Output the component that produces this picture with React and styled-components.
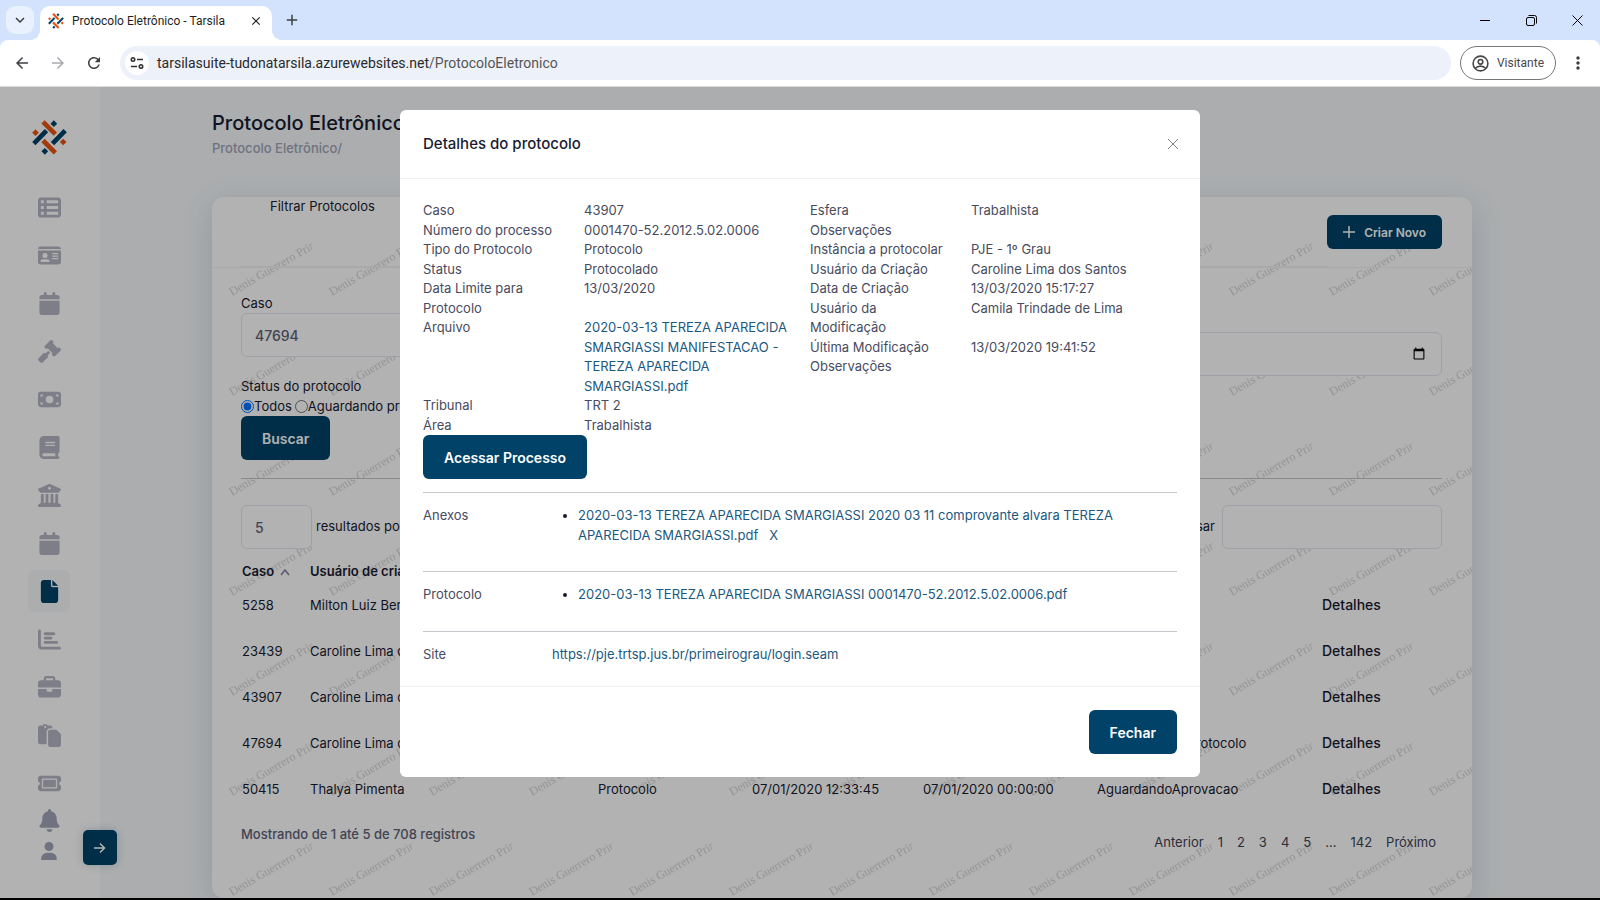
import React, { useState } from 'react';
import styled, { createGlobalStyle } from 'styled-components';
import {
	FaTableList, FaIdCard, FaCalendar, FaGavel, FaMoneyBill, FaBook, FaBuildingColumns,
	FaFile, FaChartBar, FaBriefcase, FaPaste, FaTicket, FaBell, FaUser,
} from 'react-icons/fa6';
import {
	MdKeyboardArrowDown, MdArrowBack, MdArrowForward, MdRefresh, MdClose, MdAdd, MdMoreVert,
} from 'react-icons/md';

const navy = '#004268';
const chromeFont = 'Roboto, "Noto Sans", sans-serif';

const GlobalStyle = createGlobalStyle`
	* {
		box-sizing: border-box;
	}

	body {
		margin: 0;
		font-family: Inter, sans-serif;
		font-size: 13px;
		line-height: 1.5;
		color: #181c32;
	}

	button, input, select {
		font-family: inherit;
	}

	a {
		color: #1b5880;
		text-decoration: none;
	}
`;

/* ---------- browser window ---------- */

const Window = styled.div`
	display: flex;
	flex-direction: column;
	height: 100vh;
	overflow: hidden;
	border-bottom: 2px solid #000;
	background: #d3e3fd;
`;

const TabStrip = styled.div`
	display: flex;
	flex: none;
	align-items: flex-end;
	height: 40px;
	padding-left: 6px;
`;

const ChromeButton = styled.button`
	display: flex;
	flex: none;
	align-items: center;
	justify-content: center;
	width: ${(props) => props.$width || 28}px;
	height: 28px;
	padding: 0;
	border: 0;
	border-radius: 9px;
	background: ${(props) => props.$background || 'none'};
	color: ${(props) => props.$color || '#3c3f43'};
	font-size: ${(props) => props.$size || 18}px;
`;

const TabSearch = styled(ChromeButton)`
	align-self: center;
	margin-right: 6px;
`;

const BrowserTab = styled.div`
	position: relative;
	display: flex;
	align-items: center;
	width: 232px;
	height: 34px;
	padding: 0 2px 5px 8px;
	border-radius: 10px 10px 0 0;
	background: #fff;
	color: #1f1f1f;
	font: 12px/16px ${chromeFont};

	&::before,
	&::after {
		content: '';
		position: absolute;
		bottom: 0;
		width: 10px;
		height: 10px;
	}

	&::before {
		left: -10px;
		background: radial-gradient(circle at 0 0, transparent 10px, #fff 10px);
	}

	&::after {
		right: -10px;
		background: radial-gradient(circle at 100% 0, transparent 10px, #fff 10px);
	}
`;

const TabTitle = styled.span`
	flex: 1;
	padding-left: 8px;
	white-space: nowrap;
`;

const NewTab = styled(ChromeButton)`
	align-self: center;
	margin-left: 6px;
`;

const WindowControls = styled.div`
	display: flex;
	align-self: center;
	margin-left: auto;
`;

const Toolbar = styled.div`
	display: flex;
	flex: none;
	align-items: center;
	height: 47px;
	padding-left: 8px;
	border-bottom: 1px solid #dadce0;
	border-radius: 8px 8px 0 0;
	background: #fff;
`;

const NavButtons = styled.div`
	display: flex;
	gap: 8px;
	margin-right: 12px;
`;

const AddressBar = styled.div`
	display: flex;
	flex: 1;
	align-items: center;
	gap: 8px;
	height: 34px;
	margin-right: 9px;
	padding-left: 5px;
	border-radius: 17px;
	background: #edf1fa;
`;

const SiteInfo = styled.button`
	display: flex;
	align-items: center;
	justify-content: center;
	width: 24px;
	height: 24px;
	padding: 0;
	border: 0;
	border-radius: 50%;
	background: #fff;
`;

const Address = styled.div`
	color: #555;
	font: 14px/20px ${chromeFont};

	span {
		color: #2a2a2a;
	}
`;

const Profile = styled.button`
	display: flex;
	align-items: center;
	gap: 8px;
	height: 34px;
	padding: 0 11px;
	border: 1px solid #747775;
	border-radius: 17px;
	background: #fff;
	color: #474747;
	font: 12px/16px ${chromeFont};
`;

/* ---------- page ---------- */

const Viewport = styled.div`
	position: relative;
	display: flex;
	flex: 1;
	min-height: 0;
	overflow: hidden;
	background: #f5f8fa;
`;

const Sidebar = styled.aside`
	position: relative;
	display: flex;
	flex: none;
	flex-direction: column;
	align-items: center;
	width: 100px;
	padding: 33px 2px 0 0;
	background: #fff;
`;

const Menu = styled.nav`
	display: flex;
	flex-direction: column;
	gap: 6px;
	margin-top: 31px;
`;

const MenuLink = styled.a`
	display: flex;
	align-items: center;
	justify-content: center;
	width: 42px;
	height: 42px;
	border-radius: 6px;
	background: ${(props) => (props.$active ? '#f5f8fa' : 'none')};
	color: ${(props) => (props.$active ? navy : '#b5b5c3')};

	svg {
		width: auto;
		height: 23px;
	}
`;

const SidebarFooter = styled.div`
	display: flex;
	flex-direction: column;
	align-items: center;
	gap: 10px;
	margin-top: 5px;
	color: #a1a5b7;
`;

const IconButton = styled.button`
	display: flex;
	padding: 0;
	border: 0;
	background: none;
	color: inherit;
	font-size: ${(props) => props.$size}px;
`;

const SidebarToggle = styled.button`
	position: absolute;
	right: -17px;
	bottom: 33px;
	display: flex;
	align-items: center;
	justify-content: center;
	width: 34px;
	height: 35px;
	padding: 0;
	border: 0;
	border-radius: 5px;
	background: ${navy};
	box-shadow: 0 0 10px rgba(0, 66, 104, 0.2);
	z-index: 1;
`;

const Main = styled.main`
	flex: 1;
	min-width: 0;
	padding: 22px 128px 0 112px;
`;

const PageTitle = styled.h1`
	margin: 0;
	font-size: 20px;
	font-weight: 500;
	line-height: 28px;
`;

const Breadcrumb = styled.div`
	margin-top: 1px;
	color: #a1a5b7;
	font-weight: 500;
	line-height: 20px;
`;

const Card = styled.section`
	position: relative;
	height: 701px;
	margin-top: 39px;
	border-radius: 12px;
	background: #fff;
	box-shadow: 0 8px 30px rgba(72, 104, 144, 0.2);
	overflow: hidden;
`;

const Watermark = styled.svg`
	position: absolute;
	inset: 0;
	width: 100%;
	height: 100%;
`;

const CardHeader = styled.header`
	position: relative;
	display: flex;
	justify-content: space-between;
	height: 71px;
	padding: 0 30px 0 29px;
	border-bottom: 1px solid #eff2f5;
`;

const FilterHeading = styled.div`
	flex: 1;
	padding-left: 29px;
	border-bottom: 1px solid #eff2f5;
`;

const CardBody = styled.div`
	position: relative;
	padding: 25px 30px 0 29px;
`;

const Button = styled.button`
	display: flex;
	align-items: center;
	justify-content: center;
	gap: 9px;
	width: fit-content;
	height: ${(props) => (props.$small ? 34 : 44)}px;
	padding: 0 ${(props) => (props.$small ? 16 : 21)}px;
	border: 0;
	border-radius: 6px;
	background: ${navy};
	color: #fff;
	font-size: ${(props) => (props.$small ? 12 : 14)}px;
	font-weight: 600;
`;

const HeaderButton = styled(Button)`
	margin-top: 18px;
`;

const Fields = styled.div`
	display: grid;
	grid-template-columns: 1fr 1fr;
	align-items: start;
	column-gap: 20px;
`;

const Label = styled.label`
	display: block;
	line-height: 20px;
`;

const Input = styled.input`
	display: block;
	width: ${(props) => props.$width || '100%'};
	height: 44px;
	padding: 0 13px;
	border: 1px solid #e4e6ef;
	border-radius: 6px;
	background: #fff;
	color: #5e6278;
	font-size: 14px;
	font-weight: 500;
`;

const DateField = styled.div`
	padding-top: 39px;
`;

const StatusField = styled.fieldset`
	margin: 0;
	padding: 0;
	border: 0;
	line-height: 20px;

	legend {
		padding: 0;
	}

	label {
		display: flex;
		align-items: center;
	}

	input {
		margin: 0;
	}
`;

const RadioRow = styled.div`
	display: flex;
	gap: 3px;
`;

const Divider = styled.hr`
	height: 1px;
	margin: ${(props) => props.$space || 13}px 0;
	border: 0;
	background: #c5c6cc;
`;

const TableTools = styled.div`
	display: flex;
	justify-content: space-between;
	margin-top: 26px;
`;

const ToolGroup = styled.div`
	display: flex;
	align-items: center;
	gap: ${(props) => props.$gap}px;
`;

const PageSize = styled.select`
	width: 71px;
	height: 44px;
	padding: 0 13px;
	border: 1px solid #e4e6ef;
	border-radius: 6px;
	background: #fff;
	color: #5e6278;
	font-size: 14px;
	font-weight: 500;
	appearance: none;
`;

const Table = styled.table`
	width: 100%;
	margin-top: 11px;
	border-collapse: collapse;
	table-layout: fixed;
	text-align: left;

	th {
		height: 23px;
		padding: 0 1px;
		font-weight: 600;
		white-space: nowrap;
	}

	td {
		height: 46px;
		padding: 0 1px;
		white-space: nowrap;
	}
`;

const SortIcon = styled.svg`
	margin-left: 3px;
`;

const DetailsLink = styled.button`
	padding: 0;
	border: 0;
	background: none;
	color: #181c32;
	font-size: 14px;
	font-weight: 500;
`;

const TableFooter = styled.div`
	display: flex;
	justify-content: space-between;
	margin-top: 11px;
	color: #5e6278;
	font-weight: 500;
	line-height: 20px;
`;

const Pagination = styled.nav`
	display: flex;
	gap: 14px;
	padding: 8px 6px 0 0;
	font-weight: 400;

	a, span {
		color: #3f4254;
	}
`;

/* ---------- modal ---------- */

const Backdrop = styled.div`
	position: absolute;
	inset: 0;
	display: flex;
	align-items: flex-start;
	justify-content: center;
	padding-top: 23px;
	background: rgba(0, 0, 0, 0.3);
	z-index: 2;
`;

const Modal = styled.div`
	width: 100%;
	max-width: 800px;
	border-radius: 6px;
	background: #fff;
	color: #484b5e;
`;

const ModalHeader = styled.header`
	display: flex;
	align-items: center;
	justify-content: space-between;
	height: 69px;
	padding: 0 21px 0 23px;
	border-bottom: 1px solid #eff2f5;
`;

const ModalTitle = styled.h2`
	margin: 0;
	color: #181c32;
	font-size: 15px;
	font-weight: 500;
	line-height: 20px;
`;

const ModalBody = styled.div`
	padding: 22px 23px;
`;

const ModalFooter = styled.footer`
	display: flex;
	justify-content: flex-end;
	padding: 23px;
	border-top: 1px solid #eff2f5;
`;

const Columns = styled.div`
	display: grid;
	grid-template-columns: 1fr 1fr;
	column-gap: 20px;
`;

const Details = styled.dl`
	margin: 0;

	div {
		display: grid;
		grid-template-columns: 141px 1fr;
		column-gap: 20px;
	}

	dd {
		margin: 0;
	}
`;

const Section = styled.section`
	display: grid;
	grid-template-columns: 109px 1fr;
	column-gap: 20px;
`;

const Files = styled.ul`
	margin: 0 0 13px;
	padding-left: 26px;

	li::marker {
		color: #181c32;
	}

	a + a {
		margin-left: 11px;
	}
`;

const menu = [
	['Painel', FaTableList],
	['Contatos', FaIdCard],
	['Agenda', FaCalendar],
	['Processos', FaGavel],
	['Financeiro', FaMoneyBill],
	['Publicações', FaBook],
	['Tribunais', FaBuildingColumns],
	['Prazos', FaCalendar],
	['Protocolo Eletrônico', FaFile],
	['Relatórios', FaChartBar],
	['Escritório', FaBriefcase],
	['Documentos', FaPaste],
	['Chamados', FaTicket],
];

const protocols = [
	['5258', 'Milton Luiz Bernardo', 'Protocolo', '06/01/2020 10:12:08', '07/01/2020 00:00:00', 'Protocolado'],
	['23439', 'Caroline Lima dos Santos', 'Protocolo', '10/02/2020 11:40:31', '11/02/2020 00:00:00', 'Protocolado'],
	['43907', 'Caroline Lima dos Santos', 'Protocolo', '13/03/2020 15:17:27', '13/03/2020 00:00:00', 'Protocolado'],
	['47694', 'Caroline Lima dos Santos', 'Protocolo', '16/03/2020 09:25:14', '17/03/2020 00:00:00', 'Aguardando o Protocolo'],
	['50415', 'Thalya Pimenta', 'Protocolo', '07/01/2020 12:33:45', '07/01/2020 00:00:00', 'AguardandoAprovacao'],
];

const leftDetails = [
	['Caso', '43907'],
	['Número do processo', '0001470-52.2012.5.02.0006'],
	['Tipo do Protocolo', 'Protocolo'],
	['Status', 'Protocolado'],
	['Data Limite para Protocolo', '13/03/2020'],
	['Arquivo', <a href="#arquivo">2020-03-13 TEREZA APARECIDA SMARGIASSI MANIFESTACAO - TEREZA APARECIDA SMARGIASSI.pdf</a>],
	['Tribunal', 'TRT 2'],
	['Área', 'Trabalhista'],
];

const rightDetails = [
	['Esfera', 'Trabalhista'],
	['Observações', ''],
	['Instância a protocolar', 'PJE - 1º Grau'],
	['Usuário da Criação', 'Caroline Lima dos Santos'],
	['Data de Criação', '13/03/2020 15:17:27'],
	['Usuário da Modificação', 'Camila Trindade de Lima'],
	['Última Modificação', '13/03/2020 19:41:52'],
	['Observações', ''],
];

const Logo = ({ size }) => (
	<svg width={size} height={size} viewBox="0 0 104 105" fill="none" strokeWidth="14" aria-hidden="true">
		<path stroke="#ea5412" d="M32.5 5.5l37 37M32.5 61.5l37 37" />
		<path stroke={navy} d="M5 71l38-39M61 71l38-39" />
		<path fill="#ea5412" d="M10 28l10 10-10 10L0 38zM93 56l10 10-10 10-10-10z" />
		<path fill={navy} d="M65 1l10 10-10 10-10-10zM38 84l10 10-10 10-10-10z" />
	</svg>
);

const DetailList = ({ items }) => (
	<Details>
		{items.map(([label, value], i) => (
			<div key={i}>
				<dt>{label}</dt>
				<dd>{value}</dd>
			</div>
		))}
	</Details>
);

const Browser = () => (
	<>
		<TabStrip>
			<TabSearch aria-label="Pesquisar guias" $background="#e9f1fe"><MdKeyboardArrowDown /></TabSearch>
			<BrowserTab>
				<Logo size={16} />
				<TabTitle>Protocolo Eletrônico - Tarsila</TabTitle>
				<ChromeButton aria-label="Fechar guia" $size={14} $color="#1f1f1f"><MdClose /></ChromeButton>
			</BrowserTab>
			<NewTab aria-label="Nova guia"><MdAdd /></NewTab>
			<WindowControls>
				<ChromeButton aria-label="Minimizar" $width={46}>
					<svg width="10" height="10" stroke="#000"><path d="M0 5.5h10" /></svg>
				</ChromeButton>
				<ChromeButton aria-label="Restaurar" $width={46}>
					<svg width="11" height="11" fill="none" stroke="#000">
						<rect x="0.5" y="2.5" width="8" height="8" rx="1.5" />
						<path d="M2.5 .5h6a2 2 0 0 1 2 2v6" />
					</svg>
				</ChromeButton>
				<ChromeButton aria-label="Fechar janela" $width={46}>
					<svg width="11" height="11" stroke="#000"><path d="M.5.5l10 10M10.5.5l-10 10" /></svg>
				</ChromeButton>
			</WindowControls>
		</TabStrip>
		<Toolbar>
			<NavButtons>
				<ChromeButton aria-label="Voltar"><MdArrowBack /></ChromeButton>
				<ChromeButton aria-label="Avançar" $color="#a9abae"><MdArrowForward /></ChromeButton>
				<ChromeButton aria-label="Recarregar"><MdRefresh /></ChromeButton>
			</NavButtons>
			<AddressBar>
				<SiteInfo aria-label="Informações do site">
					<svg width="14" height="12" viewBox="0 0 14 12" fill="none" stroke="#303134" strokeWidth="1.6">
						<circle cx="3" cy="2.5" r="1.7" />
						<path d="M7 2.5h6M1 9.5h6" />
						<circle cx="11" cy="9.5" r="1.7" />
					</svg>
				</SiteInfo>
				<Address><span>tarsilasuite-tudonatarsila.azurewebsites.net</span>/ProtocoloEletronico</Address>
			</AddressBar>
			<Profile>
				<svg width="17" height="17" viewBox="0 0 17 17" fill="none" stroke="currentColor" strokeWidth="1.6">
					<circle cx="8.5" cy="8.5" r="7.4" />
					<circle cx="8.5" cy="6.8" r="2.3" />
					<path d="M3.4 13.4c1.2-1.7 3-2.3 5.1-2.3s3.9.6 5.1 2.3" />
				</svg>
				Visitante
			</Profile>
			<ChromeButton aria-label="Menu" $width={44}><MdMoreVert size={20} /></ChromeButton>
		</Toolbar>
	</>
);

const App = () => {
	const [open, setOpen] = useState(true);

	return (
		<Window>
			<GlobalStyle />
			<Browser />
			<Viewport>
				<Sidebar>
					<Logo size={35} />
					<Menu>
						{menu.map(([name, Icon], i) => (
							<MenuLink key={name} href="#menu" aria-label={name} $active={i === 8}><Icon /></MenuLink>
						))}
					</Menu>
					<SidebarFooter>
						<IconButton aria-label="Notificações" $size={23}><FaBell /></IconButton>
						<IconButton aria-label="Usuário" $size={18}><FaUser /></IconButton>
					</SidebarFooter>
					<SidebarToggle aria-label="Expandir menu">
						<svg width="12" height="12" fill="none" stroke="#fff" strokeWidth="1.5"><path d="M0 6h10M6 1.5l4.5 4.5L6 10.5" /></svg>
					</SidebarToggle>
				</Sidebar>
				<Main>
					<PageTitle>Protocolo Eletrônico</PageTitle>
					<Breadcrumb>Protocolo Eletrônico/</Breadcrumb>
					<Card>
						<Watermark aria-hidden="true">
							<defs>
								<pattern id="watermark" width="100" height="100" patternUnits="userSpaceOnUse">
									<text
										transform="translate(20 99) rotate(-30)"
										fill="#000"
										fillOpacity="0.18"
										fontFamily="Liberation Serif, serif"
										fontSize="12"
									>
										Denis Guerrero Prin
									</text>
								</pattern>
							</defs>
							<rect width="100%" height="100%" fill="url(#watermark)" />
						</Watermark>
						<CardHeader>
							<FilterHeading>Filtrar Protocolos</FilterHeading>
							<HeaderButton $small>
								<svg width="12" height="12" stroke="#fff" strokeWidth="1.5"><path d="M6 0v12M0 6h12" /></svg>
								Criar Novo
							</HeaderButton>
						</CardHeader>
						<CardBody>
							<Fields>
								<div>
									<Label htmlFor="caso">Caso</Label>
									<Input id="caso" defaultValue="47694" />
								</div>
								<DateField>
									<Input type="date" aria-label="Data limite" />
								</DateField>
							</Fields>
							<StatusField>
								<legend>Status do protocolo</legend>
								<RadioRow>
									<label><input type="radio" name="status" defaultChecked />Todos</label>
									<label><input type="radio" name="status" />Aguardando protocolo</label>
								</RadioRow>
							</StatusField>
							<Button>Buscar</Button>
							<Divider $space={18} />
							<TableTools>
								<ToolGroup $gap={4}>
									<PageSize id="page-size" defaultValue="5">
										<option>5</option>
										<option>10</option>
									</PageSize>
									<label htmlFor="page-size">resultados por página</label>
								</ToolGroup>
								<ToolGroup $gap={7}>
									<label htmlFor="search">Pesquisar</label>
									<Input id="search" $width="220px" />
								</ToolGroup>
							</TableTools>
							<Table>
								<colgroup>
									<col width="68" />
									<col width="288" />
									<col width="154" />
									<col width="171" />
									<col width="174" />
									<col width="225" />
									<col />
								</colgroup>
								<thead>
									<tr>
										<th>
											Caso
											<SortIcon width="16" height="8" viewBox="0 0 16 8" fill="none" stroke="#7e8299" strokeWidth="1.5"><path d="M4 7l4-5 4 5" /></SortIcon>
										</th>
										<th>Usuário de criação</th>
										<th>Tipo</th>
										<th>Data de criação</th>
										<th>Data limite</th>
										<th>Status</th>
										<th aria-label="Ações" />
									</tr>
								</thead>
								<tbody>
									{protocols.map((row) => (
										<tr key={row[0]}>
											{row.map((cell, i) => <td key={i}>{cell}</td>)}
											<td><DetailsLink onClick={() => setOpen(true)}>Detalhes</DetailsLink></td>
										</tr>
									))}
								</tbody>
							</Table>
							<TableFooter>
								<div>Mostrando de 1 até 5 de 708 registros</div>
								<Pagination>
									<a href="#anterior">Anterior</a>
									{[1, 2, 3, 4, 5].map((n) => <a key={n} href={`#${n}`}>{n}</a>)}
									<span>...</span>
									<a href="#142">142</a>
									<a href="#proximo">Próximo</a>
								</Pagination>
							</TableFooter>
						</CardBody>
					</Card>
				</Main>
				{open && (
					<Backdrop>
						<Modal role="dialog" aria-labelledby="modal-title">
							<ModalHeader>
								<ModalTitle id="modal-title">Detalhes do protocolo</ModalTitle>
								<IconButton aria-label="Fechar" onClick={() => setOpen(false)}>
									<svg width="12" height="12" stroke="#7f7f7f"><path d="M1 1l10 10M11 1L1 11" /></svg>
								</IconButton>
							</ModalHeader>
							<ModalBody>
								<Columns>
									<DetailList items={leftDetails} />
									<DetailList items={rightDetails} />
								</Columns>
								<Button>Acessar Processo</Button>
								<Divider />
								<Section>
									<div>Anexos</div>
									<Files>
										<li>
											<a href="#anexo">2020-03-13 TEREZA APARECIDA SMARGIASSI 2020 03 11 comprovante alvara TEREZA APARECIDA SMARGIASSI.pdf</a>
											<a href="#remover">X</a>
										</li>
									</Files>
								</Section>
								<Divider />
								<Section>
									<div>Protocolo</div>
									<Files>
										<li><a href="#protocolo">2020-03-13 TEREZA APARECIDA SMARGIASSI 0001470-52.2012.5.02.0006.pdf</a></li>
									</Files>
								</Section>
								<Divider />
								<Section>
									<div>Site</div>
									<a href="https://pje.trtsp.jus.br/primeirograu/login.seam">https://pje.trtsp.jus.br/primeirograu/login.seam</a>
								</Section>
							</ModalBody>
							<ModalFooter>
								<Button onClick={() => setOpen(false)}>Fechar</Button>
							</ModalFooter>
						</Modal>
					</Backdrop>
				)}
			</Viewport>
		</Window>
	);
};

export default App;
